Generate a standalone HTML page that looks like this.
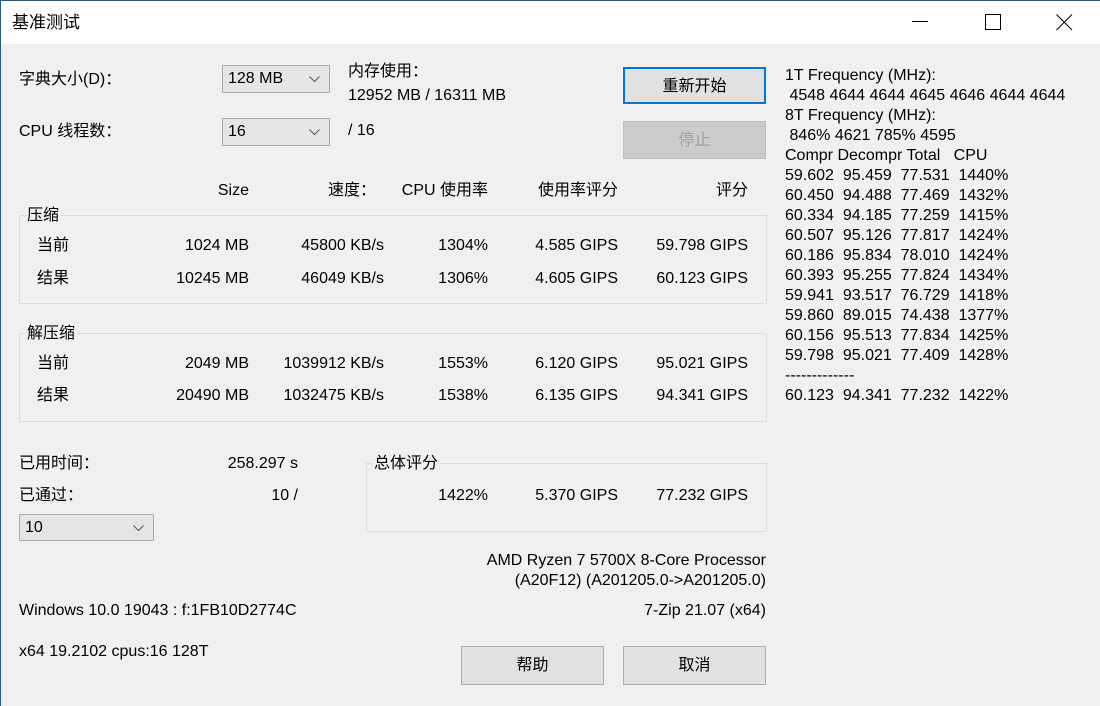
<!DOCTYPE html><html><head><meta charset="utf-8"><style>
body{margin:0;width:1100px;height:706px;background:#f0f0f0;position:relative;overflow:hidden;font-family:"Liberation Sans","Noto Sans CJK SC",sans-serif;font-size:16px;color:#000}
.t{position:absolute;line-height:18px;white-space:nowrap}
.r{text-align:right}
.title{position:absolute;left:0;top:0;width:1100px;height:44px;background:#fff}
.box{position:absolute;border:1px solid #dcdcdc}
.lbl{position:absolute;background:#f0f0f0;line-height:18px;padding-right:2px}
.cb{position:absolute;background:#e5e5e5;border:1px solid #adadad;box-sizing:border-box}
.cb span{position:absolute;left:5px;top:4px;line-height:18px}
.cb svg{position:absolute;right:9px;top:10px}
.btn{position:absolute;background:#e1e1e1;border:1px solid #adadad;box-sizing:border-box;text-align:center}
</style></head><body>
<div class="title"></div>
<div style="position:absolute;left:0;top:0;width:1099px;height:705px;border:1px solid #2b5a7a;border-bottom:none;border-right-color:#aaa;pointer-events:none"></div>
<div class="t" style="left:12px;top:14px;font-size:17px">基准测试</div>
<svg style="position:absolute;left:912px;top:21px" width="20" height="2"><rect width="16" height="1" fill="#000"/></svg>
<svg style="position:absolute;left:985px;top:14px" width="17" height="17"><rect x="0.5" y="0.5" width="15" height="15" fill="none" stroke="#000"/></svg>
<svg style="position:absolute;left:1056px;top:14px" width="17" height="17"><path d="M0.5 0.5L16 16M16 0.5L0.5 16" stroke="#000"/></svg>

<div class="t" style="left:19px;top:71px">字典大小(D)：</div>
<div class="cb" style="left:222px;top:65px;width:108px;height:28px"><span>128 MB</span><svg width="11" height="7"><path d="M0.5 0.5L5.5 5.5L10.5 0.5" fill="none" stroke="#555"/></svg></div>
<div class="t" style="left:348px;top:63px">内存使用：</div>
<div class="t" style="left:348px;top:87px">12952 MB / 16311 MB</div>
<div class="t" style="left:19px;top:123px">CPU 线程数：</div>
<div class="cb" style="left:222px;top:118px;width:108px;height:28px"><span>16</span><svg width="11" height="7"><path d="M0.5 0.5L5.5 5.5L10.5 0.5" fill="none" stroke="#555"/></svg></div>
<div class="t" style="left:348px;top:122px">/ 16</div>

<div class="btn" style="left:623px;top:67px;width:143px;height:37px;border:2px solid #0078d7;line-height:35px">重新开始</div>
<div class="btn" style="left:623px;top:121px;width:143px;height:38px;background:#cccccc;border-color:#bfbfbf;color:#a0a0a0;line-height:38px">停止</div>

<div class="t r" style="left:150px;width:99px;top:182px">Size</div>
<div class="t r" style="left:280px;width:96px;top:182px">速度：</div>
<div class="t r" style="left:388px;width:100px;top:182px">CPU 使用率</div>
<div class="t r" style="left:508px;width:110px;top:182px">使用率评分</div>
<div class="t r" style="left:638px;width:110px;top:182px">评分</div>

<div class="box" style="left:19px;top:215px;width:746px;height:87px"></div>
<div class="lbl" style="left:27px;top:207px">压缩</div>
<div class="t" style="left:37px;top:237px">当前</div>
<div class="t r" style="left:150px;width:99px;top:237px">1024 MB</div>
<div class="t r" style="left:260px;width:124px;top:237px">45800 KB/s</div>
<div class="t r" style="left:388px;width:100px;top:237px">1304%</div>
<div class="t r" style="left:508px;width:110px;top:237px">4.585 GIPS</div>
<div class="t r" style="left:628px;width:120px;top:237px">59.798 GIPS</div>
<div class="t" style="left:37px;top:270px">结果</div>
<div class="t r" style="left:150px;width:99px;top:270px">10245 MB</div>
<div class="t r" style="left:260px;width:124px;top:270px">46049 KB/s</div>
<div class="t r" style="left:388px;width:100px;top:270px">1306%</div>
<div class="t r" style="left:508px;width:110px;top:270px">4.605 GIPS</div>
<div class="t r" style="left:628px;width:120px;top:270px">60.123 GIPS</div>

<div class="box" style="left:19px;top:333px;width:746px;height:87px"></div>
<div class="lbl" style="left:27px;top:325px">解压缩</div>
<div class="t" style="left:37px;top:355px">当前</div>
<div class="t r" style="left:150px;width:99px;top:355px">2049 MB</div>
<div class="t r" style="left:260px;width:124px;top:355px">1039912 KB/s</div>
<div class="t r" style="left:388px;width:100px;top:355px">1553%</div>
<div class="t r" style="left:508px;width:110px;top:355px">6.120 GIPS</div>
<div class="t r" style="left:628px;width:120px;top:355px">95.021 GIPS</div>
<div class="t" style="left:37px;top:387px">结果</div>
<div class="t r" style="left:150px;width:99px;top:387px">20490 MB</div>
<div class="t r" style="left:260px;width:124px;top:387px">1032475 KB/s</div>
<div class="t r" style="left:388px;width:100px;top:387px">1538%</div>
<div class="t r" style="left:508px;width:110px;top:387px">6.135 GIPS</div>
<div class="t r" style="left:628px;width:120px;top:387px">94.341 GIPS</div>

<div class="t" style="left:19px;top:455px">已用时间：</div>
<div class="t r" style="left:180px;width:118px;top:455px">258.297 s</div>
<div class="t" style="left:19px;top:487px">已通过：</div>
<div class="t r" style="left:200px;width:98px;top:487px">10 /</div>
<div class="cb" style="left:19px;top:514px;width:135px;height:27px"><span>10</span><svg width="11" height="7"><path d="M0.5 0.5L5.5 5.5L10.5 0.5" fill="none" stroke="#555"/></svg></div>

<div class="box" style="left:366px;top:463px;width:399px;height:67px"></div>
<div class="lbl" style="left:374px;top:455px">总体评分</div>
<div class="t r" style="left:388px;width:100px;top:487px">1422%</div>
<div class="t r" style="left:508px;width:110px;top:487px">5.370 GIPS</div>
<div class="t r" style="left:628px;width:120px;top:487px">77.232 GIPS</div>

<div class="t r" style="left:400px;width:366px;top:552px">AMD Ryzen 7 5700X 8-Core Processor</div>
<div class="t r" style="left:400px;width:366px;top:572px">(A20F12) (A201205.0-&gt;A201205.0)</div>
<div class="t r" style="left:400px;width:366px;top:602px">7-Zip 21.07 (x64)</div>
<div class="t" style="left:19px;top:602px">Windows 10.0 19043 : f:1FB10D2774C</div>
<div class="t" style="left:19px;top:643px">x64 19.2102 cpus:16 128T</div>

<div class="btn" style="left:461px;top:646px;width:143px;height:39px;line-height:37px">帮助</div>
<div class="btn" style="left:623px;top:646px;width:143px;height:39px;line-height:37px">取消</div>

<div class="t" style="left:785px;top:66px;line-height:20px">1T Frequency (MHz):<br>&nbsp;4548 4644 4644 4645 4646 4644 4644<br>8T Frequency (MHz):<br>&nbsp;846% 4621 785% 4595<br>Compr Decompr Total &nbsp; CPU<br>59.602 &nbsp;95.459 &nbsp;77.531 &nbsp;1440%<br>60.450 &nbsp;94.488 &nbsp;77.469 &nbsp;1432%<br>60.334 &nbsp;94.185 &nbsp;77.259 &nbsp;1415%<br>60.507 &nbsp;95.126 &nbsp;77.817 &nbsp;1424%<br>60.186 &nbsp;95.834 &nbsp;78.010 &nbsp;1424%<br>60.393 &nbsp;95.255 &nbsp;77.824 &nbsp;1434%<br>59.941 &nbsp;93.517 &nbsp;76.729 &nbsp;1418%<br>59.860 &nbsp;89.015 &nbsp;74.438 &nbsp;1377%<br>60.156 &nbsp;95.513 &nbsp;77.834 &nbsp;1425%<br>59.798 &nbsp;95.021 &nbsp;77.409 &nbsp;1428%<br>-------------<br>60.123 &nbsp;94.341 &nbsp;77.232 &nbsp;1422%</div>
</body></html>
